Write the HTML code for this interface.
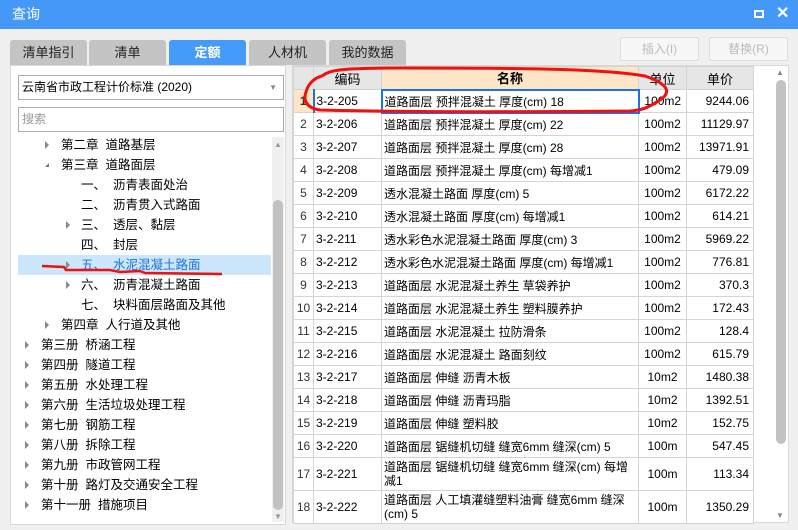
<!DOCTYPE html>
<html><head><meta charset="utf-8"><style>
*{margin:0;padding:0;box-sizing:border-box}
body{width:798px;height:530px;background:#f0f0f0;font-family:"Liberation Sans","Noto Sans CJK SC","WenQuanYi Zen Hei",sans-serif;font-size:12px;color:#000;position:relative;overflow:hidden}
.abs{position:absolute}
.title{left:0;top:0;width:798px;height:29px;background:#4499f8;color:#fff;font-size:14px;line-height:29px;padding-left:12px}
.tab{top:40px;height:25px;width:77px;background:#c4c4c4;border-radius:3px 3px 0 0;text-align:center;line-height:25px;font-size:13px;color:#222}
.tab.on{background:#459bf9;color:#fff;font-weight:bold}
.btn{top:37px;height:24px;width:79px;border:1px solid #ddd;background:#f7f7f7;color:#bbb;text-align:center;line-height:22px;font-size:12px;border-radius:2px}
.left{left:10px;top:65px;width:276px;height:460px;background:#fff;border:1px solid #d8d8d8}
.dd{left:18px;top:75px;width:266px;height:25px;border:1px solid #aaa;background:#fff;line-height:23px;padding-left:3px;font-size:12px}
.sr{left:18px;top:107px;width:266px;height:25px;border:1px solid #aaa;background:#fff;line-height:23px;padding-left:3px;color:#999;font-size:12px}
.ti{height:20px;line-height:20px;font-size:12.5px;white-space:pre}
.ar{width:0;height:0;border-top:4px solid transparent;border-bottom:4px solid transparent;border-left:4px solid #888}
.ard{width:0;height:0;border-left:4px solid transparent;border-bottom:4px solid #777;border-top:0}
table{border-collapse:collapse;position:absolute;left:293px;top:66px;table-layout:fixed}
td{border:1px solid #d4d4d4;height:23px;font-size:12px;padding:0 2px;white-space:nowrap;overflow:hidden;background:#fff}
th{border:1px solid #d4d4d4;height:23px;font-size:13px;background:#e6e6e6;font-weight:normal}
td.n{text-align:center;color:#333;background:#fff}
td.r{text-align:right;padding-right:4px}
td.u{text-align:center}
</style></head><body>
<div class="abs title">查询</div>
<div class="abs" style="left:754px;top:10px;width:10px;height:8px;border:2px solid #fff"></div>
<div class="abs" style="left:776px;top:3px;color:#fff;font-size:16px;font-weight:bold;line-height:22px">✕</div>

<div class="abs tab" style="left:10px">清单指引</div>
<div class="abs tab" style="left:89px">清单</div>
<div class="abs tab on" style="left:169px">定额</div>
<div class="abs tab" style="left:249px">人材机</div>
<div class="abs tab" style="left:329px">我的数据</div>
<div class="abs btn" style="left:620px">插入(I)</div>
<div class="abs btn" style="left:709px">替换(R)</div>

<div class="abs left"></div>
<div class="abs dd">云南省市政工程计价标准 (2020)<span style="position:absolute;right:6px;top:0;color:#888;font-size:8px">▼</span></div>
<div class="abs sr">搜索</div>
<div class="abs" style="left:272px;top:137px;width:12px;height:385px;background:#f0f0f0"></div>
<div class="abs" style="left:274px;top:140px;color:#999;font-size:8px">▲</div>
<div class="abs" style="left:274px;top:512px;color:#999;font-size:8px">▼</div>
<div class="abs" style="left:273px;top:200px;width:10px;height:310px;background:#c2c2c2;border-radius:5px"></div>
<div class="abs" style="left:18px;top:255px;width:253px;height:20px;background:#cce6fb"></div>

<div class="abs ar" style="left:45px;top:141px"></div><div class="abs ti" style="left:61px;top:135px">第二章  道路基层</div>
<div class="abs ard" style="left:45px;top:163px"></div><div class="abs ti" style="left:61px;top:155px">第三章  道路面层</div>
<div class="abs ti" style="left:81px;top:175px">一、  沥青表面处治</div>
<div class="abs ti" style="left:81px;top:195px">二、  沥青贯入式路面</div>
<div class="abs ar" style="left:66px;top:221px"></div><div class="abs ti" style="left:81px;top:215px">三、  透层、黏层</div>
<div class="abs ti" style="left:81px;top:235px">四、  封层</div>
<div class="abs ar" style="left:66px;top:261px"></div><div class="abs ti" style="left:81px;top:255px;color:#1a73d9">五、  水泥混凝土路面</div>
<div class="abs ar" style="left:66px;top:281px"></div><div class="abs ti" style="left:81px;top:275px">六、  沥青混凝土路面</div>
<div class="abs ti" style="left:81px;top:295px">七、  块料面层路面及其他</div>
<div class="abs ar" style="left:45px;top:321px"></div><div class="abs ti" style="left:61px;top:315px">第四章  人行道及其他</div>
<div class="abs ar" style="left:25px;top:341px"></div><div class="abs ti" style="left:41px;top:335px">第三册  桥涵工程</div>
<div class="abs ar" style="left:25px;top:361px"></div><div class="abs ti" style="left:41px;top:355px">第四册  隧道工程</div>
<div class="abs ar" style="left:25px;top:381px"></div><div class="abs ti" style="left:41px;top:375px">第五册  水处理工程</div>
<div class="abs ar" style="left:25px;top:401px"></div><div class="abs ti" style="left:41px;top:395px">第六册  生活垃圾处理工程</div>
<div class="abs ar" style="left:25px;top:421px"></div><div class="abs ti" style="left:41px;top:415px">第七册  钢筋工程</div>
<div class="abs ar" style="left:25px;top:441px"></div><div class="abs ti" style="left:41px;top:435px">第八册  拆除工程</div>
<div class="abs ar" style="left:25px;top:461px"></div><div class="abs ti" style="left:41px;top:455px">第九册  市政管网工程</div>
<div class="abs ar" style="left:25px;top:481px"></div><div class="abs ti" style="left:41px;top:475px">第十册  路灯及交通安全工程</div>
<div class="abs ar" style="left:25px;top:501px"></div><div class="abs ti" style="left:41px;top:495px">第十一册  措施项目</div>

<div class="abs" style="left:292px;top:65px;width:497px;height:458px;background:#fff;border:1px solid #d8d8d8"></div>
<div class="abs" style="left:776px;top:68px;color:#888;font-size:8px">▲</div>
<div class="abs" style="left:776px;top:511px;color:#888;font-size:8px">▼</div>
<div class="abs" style="left:776px;top:80px;width:10px;height:364px;background:#c2c2c2;border-radius:5px"></div>

<table>
<colgroup><col style="width:20px"><col style="width:68px"><col style="width:257px"><col style="width:48px"><col style="width:67px"></colgroup>
<tr><th></th><th>编码</th><th style="background:#fde6c8;font-weight:bold">名称</th><th>单位</th><th>单价</th></tr>
<tr><td class="n" style="background:#fde6c8;font-weight:bold">1</td><td style="border-left:2px solid #1a73e8">3-2-205</td><td style="border:2px solid #1a73e8">道路面层 预拌混凝土 厚度(cm) 18</td><td class="u">100m2</td><td class="r">9244.06</td></tr>
<tr><td class="n">2</td><td>3-2-206</td><td>道路面层 预拌混凝土 厚度(cm) 22</td><td class="u">100m2</td><td class="r">11129.97</td></tr>
<tr><td class="n">3</td><td>3-2-207</td><td>道路面层 预拌混凝土 厚度(cm) 28</td><td class="u">100m2</td><td class="r">13971.91</td></tr>
<tr><td class="n">4</td><td>3-2-208</td><td>道路面层 预拌混凝土 厚度(cm) 每增减1</td><td class="u">100m2</td><td class="r">479.09</td></tr>
<tr><td class="n">5</td><td>3-2-209</td><td>透水混凝土路面 厚度(cm) 5</td><td class="u">100m2</td><td class="r">6172.22</td></tr>
<tr><td class="n">6</td><td>3-2-210</td><td>透水混凝土路面 厚度(cm) 每增减1</td><td class="u">100m2</td><td class="r">614.21</td></tr>
<tr><td class="n">7</td><td>3-2-211</td><td>透水彩色水泥混凝土路面 厚度(cm) 3</td><td class="u">100m2</td><td class="r">5969.22</td></tr>
<tr><td class="n">8</td><td>3-2-212</td><td>透水彩色水泥混凝土路面 厚度(cm) 每增减1</td><td class="u">100m2</td><td class="r">776.81</td></tr>
<tr><td class="n">9</td><td>3-2-213</td><td>道路面层 水泥混凝土养生 草袋养护</td><td class="u">100m2</td><td class="r">370.3</td></tr>
<tr><td class="n">10</td><td>3-2-214</td><td>道路面层 水泥混凝土养生 塑料膜养护</td><td class="u">100m2</td><td class="r">172.43</td></tr>
<tr><td class="n">11</td><td>3-2-215</td><td>道路面层 水泥混凝土 拉防滑条</td><td class="u">100m2</td><td class="r">128.4</td></tr>
<tr><td class="n">12</td><td>3-2-216</td><td>道路面层 水泥混凝土 路面刻纹</td><td class="u">100m2</td><td class="r">615.79</td></tr>
<tr><td class="n">13</td><td>3-2-217</td><td>道路面层 伸缝 沥青木板</td><td class="u">10m2</td><td class="r">1480.38</td></tr>
<tr><td class="n">14</td><td>3-2-218</td><td>道路面层 伸缝 沥青玛脂</td><td class="u">10m2</td><td class="r">1392.51</td></tr>
<tr><td class="n">15</td><td>3-2-219</td><td>道路面层 伸缝 塑料胶</td><td class="u">10m2</td><td class="r">152.75</td></tr>
<tr><td class="n">16</td><td>3-2-220</td><td>道路面层 锯缝机切缝 缝宽6mm 缝深(cm) 5</td><td class="u">100m</td><td class="r">547.45</td></tr>
<tr><td class="n" style="height:33px">17</td><td>3-2-221</td><td style="white-space:normal;line-height:14px">道路面层 锯缝机切缝 缝宽6mm 缝深(cm) 每增减1</td><td class="u">100m</td><td class="r">113.34</td></tr>
<tr><td class="n" style="height:33px">18</td><td>3-2-222</td><td style="white-space:normal;line-height:14px">道路面层 人工填灌缝塑料油膏 缝宽6mm 缝深(cm) 5</td><td class="u">100m</td><td class="r">1350.29</td></tr>
</table>

<svg class="abs" style="left:0;top:0" width="798" height="530">
<path d="M322,76 C330,70 340,68 400,68 C500,68 600,68 645,76 C668,84 672,92 660,100 C650,106 645,110 630,111 C520,112 400,112 320,110 C306,108 303,100 306,92 C308,84 314,78 322,76" fill="none" stroke="#f01010" stroke-width="3"/>
<path d="M42,266 L64,267 L66,270 L110,270 L120,272 L140,271 L145,273 L222,274" fill="none" stroke="#f01010" stroke-width="2.5"/>
</svg>
</body></html>
